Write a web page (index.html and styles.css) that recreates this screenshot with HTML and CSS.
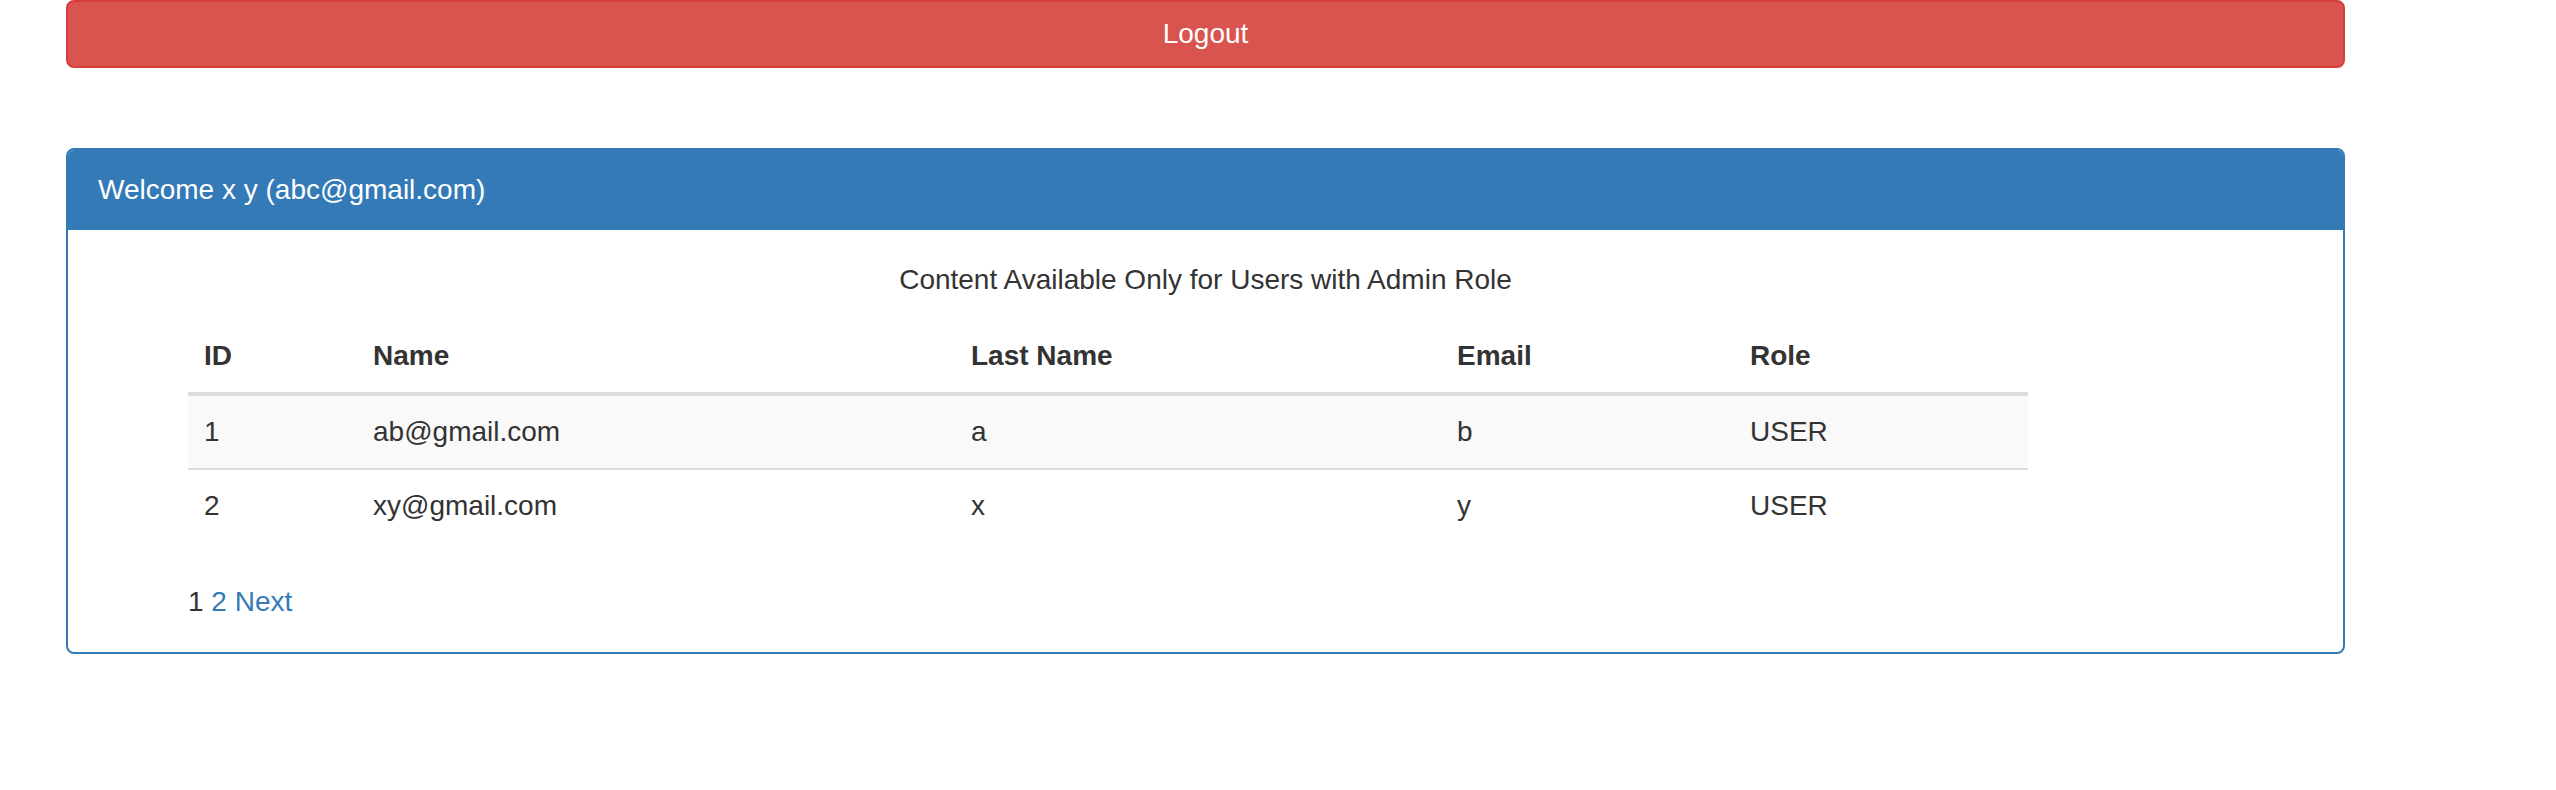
FILE: index.html
```html
<!DOCTYPE html>
<html>
<head>
<meta charset="utf-8">
<link rel="stylesheet" href="styles.css">
</head>
<body>
<div class="page">
  <button class="btn-logout">Logout</button>
  <div class="panel">
    <div class="panel-heading">Welcome x y (abc@gmail.com)</div>
    <div class="panel-body">
      <p class="notice">Content Available Only for Users with Admin Role</p>
      <div class="table-wrap">
        <table class="users">
          <thead>
            <tr>
              <th class="c-id">ID</th>
              <th class="c-name">Name</th>
              <th class="c-last">Last Name</th>
              <th class="c-email">Email</th>
              <th class="c-role">Role</th>
            </tr>
          </thead>
          <tbody>
            <tr class="odd">
              <td>1</td>
              <td>ab@gmail.com</td>
              <td>a</td>
              <td>b</td>
              <td>USER</td>
            </tr>
            <tr>
              <td>2</td>
              <td>xy@gmail.com</td>
              <td>x</td>
              <td>y</td>
              <td>USER</td>
            </tr>
          </tbody>
        </table>
        <div class="pager"><span class="current">1</span> <a href="#">2</a> <a href="#">Next</a></div>
      </div>
    </div>
  </div>
</div>
</body>
</html>
```

FILE: styles.css
```css
html, body {
  margin: 0;
  padding: 0;
  background: #fff;
}

body {
  font-family: "Liberation Sans", Arial, Helvetica, sans-serif;
  font-size: 28px;
  line-height: 40px;
  color: #333;
}

.page {
  margin-left: 66px;
  width: 2279px;
}

.btn-logout {
  display: block;
  width: 100%;
  box-sizing: border-box;
  margin: 0;
  padding: 12px 24px;
  font-family: inherit;
  font-size: 28px;
  line-height: 40px;
  color: #fff;
  background: #d9534f;
  border: 2px solid #d43f3a;
  border-radius: 8px;
  text-align: center;
}

.panel {
  margin-top: 80px;
  border: 2px solid #337ab7;
  border-radius: 8px;
  background: #fff;
}

.panel-heading {
  background: #337ab7;
  color: #fff;
  padding: 20px 30px;
  border-radius: 6px 6px 0 0;
  line-height: 40px;
}

.panel-body {
  padding: 30px;
}

.notice {
  margin: 0 0 20px;
  text-align: center;
}

.table-wrap {
  margin-left: 90px;
  width: 1840px;
}

.users {
  width: 1840px;
  border-collapse: collapse;
  border-spacing: 0;
  margin-bottom: 40px;
}

.users th,
.users td {
  padding: 16px;
  text-align: left;
  vertical-align: top;
  line-height: 40px;
}

.users th {
  font-weight: bold;
  border-bottom: 4px solid #ddd;
}

.users tbody tr + tr td {
  border-top: 2px solid #ddd;
}

.users tr.odd td {
  background: #f9f9f9;
}

.c-id { width: 137px; }
.c-name { width: 566px; }
.c-last { width: 454px; }
.c-email { width: 261px; }
.c-role { width: 262px; }

.pager {
  line-height: 40px;
}

.pager a {
  color: #337ab7;
  text-decoration: none;
}
```
